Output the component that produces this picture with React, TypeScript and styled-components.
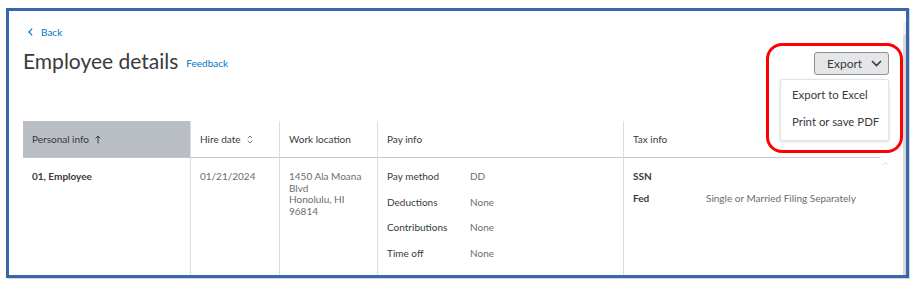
import * as React from 'react';
import styled, { createGlobalStyle } from 'styled-components';

const GlobalStyle = createGlobalStyle`
	html, body {
		margin: 0;
		background: #fff;
	}
	body {
		font-family: Lato, "Noto Sans", sans-serif;
		color: #393a3d;
	}
`;

const Page = styled.div`
	padding: 8px 10px 9px 6px;
`;

const Frame = styled.div`
	position: relative;
	height: 270px;
	box-sizing: border-box;
	border: 3px solid #3767aa;
	box-shadow: 1px 1px 0 #d6d6d6;
	display: flex;
	overflow: hidden;
	background: #fff;
`;

const Content = styled.div`
	flex: 1;
	padding: 15px 14px 0 14px;
	min-width: 0;
`;

const ScrollTrack = styled.div`
	width: 3px;
	margin-top: 11px;
	background: linear-gradient(#f0f0f0 0 13px, #d9d9d9 13px);
`;

const BackLink = styled.a`
	display: flex;
	align-items: center;
	gap: 8px;
	height: 11px;
	padding-left: 5px;
	font-size: 10px;
	color: #0077c5;
	text-decoration: none;
`;

const TitleRow = styled.div`
	display: flex;
	align-items: flex-start;
	justify-content: space-between;
	margin-top: 15px;
	height: 23px;
`;

const TitleGroup = styled.div`
	display: flex;
	align-items: baseline;
	gap: 8px;
	margin-top: -3px;
`;

const Title = styled.h1`
	margin: 0;
	font-size: 21px;
	font-weight: 400;
	line-height: 23px;
	color: #393a3d;
`;

const Feedback = styled.a`
	position: relative;
	top: -2px;
	font-size: 10px;
	color: #0077c5;
	text-decoration: none;
`;

const ExportWrap = styled.div`
	position: relative;
`;

const ExportButton = styled.button`
	display: flex;
	align-items: center;
	gap: 9px;
	width: 75px;
	height: 23px;
	box-sizing: border-box;
	padding: 0 0 0 12px;
	border: 1px solid #8d9096;
	border-radius: 3px;
	background: #e5e6e8;
	font-family: inherit;
	font-size: 12px;
	color: #393a3d;
`;

const Menu = styled.ul`
	position: absolute;
	top: 27px;
	right: 0;
	width: 109px;
	height: 62px;
	box-sizing: border-box;
	margin: 0;
	padding: 6px 0 0 11px;
	list-style: none;
	background: #fff;
	border: 1px solid #e3e4e6;
	border-radius: 2px;
	box-shadow: 0 1px 3px rgba(0, 0, 0, 0.15);
	z-index: 2;
`;

const MenuItem = styled.li`
	height: 27px;
	line-height: 18px;
	font-size: 11.4px;
	color: #393a3d;
	white-space: nowrap;
`;

const Highlight = styled.div`
	position: absolute;
	left: 757px;
	top: 32px;
	width: 137px;
	height: 110px;
	box-sizing: border-box;
	border: 3px solid #f00;
	border-radius: 16px;
	pointer-events: none;
	z-index: 3;
`;

const TableWrap = styled.div`
	display: flex;
	margin-top: 46px;
`;

const Table = styled.div`
	display: grid;
	grid-template-columns: 167px 89px 98px 246px 257px;
	grid-template-rows: 37px 1fr;
	height: 160px;
`;

const HeadCell = styled.div<{ $active?: boolean; $first?: boolean }>`
	display: flex;
	align-items: center;
	gap: 6px;
	padding-left: 9px;
	font-size: 10px;
	color: #393a3d;
	border-left: ${(p) => (p.$first ? 'none' : '1px solid #dcdde0')};
	border-bottom: 1px solid #c4c7cc;
	background: ${(p) => (p.$active ? '#babec5' : '#fff')};
`;

const Cell = styled.div<{ $first?: boolean }>`
	padding: 13px 0 0 9px;
	font-size: 10px;
	line-height: 11.5px;
	border-left: ${(p) => (p.$first ? 'none' : '1px solid #dcdde0')};
`;

const Strong = styled.div`
	font-weight: 700;
	color: #393a3d;
`;

const Muted = styled.div`
	color: #6b6c72;
`;

const Pairs = styled.div<{ $label: number; $gap: number }>`
	display: grid;
	grid-template-columns: ${(p) => p.$label}px auto;
	row-gap: ${(p) => p.$gap}px;
	justify-content: start;
`;

const PairLabel = styled.div<{ $bold?: boolean }>`
	color: #393a3d;
	font-weight: ${(p) => (p.$bold ? 700 : 400)};
`;

const PairValue = styled.div`
	color: #6b6c72;
`;

const Gutter = styled.div`
	width: 10px;
	padding: 41px 0 0 3px;

	svg {
		display: block;
	}
`;

const Chevron = ({ dir }: { dir: 'left' | 'down' | 'up' }) => {
	if (dir === 'left')
		return (
			<svg width="5" height="8" viewBox="0 0 5 8">
				<path d="M4.2 0.6 L0.8 4 L4.2 7.4" fill="none" stroke="#0077c5" strokeWidth="1.1" />
			</svg>
		);
	if (dir === 'down')
		return (
			<svg width="11" height="7" viewBox="0 0 11 7">
				<path d="M1 1 L5.5 5.5 L10 1" fill="none" stroke="#393a3d" strokeWidth="1.6" />
			</svg>
		);
	return (
		<svg width="5" height="3" viewBox="0 0 5 3">
			<path d="M0.5 2.5 L2.5 0.5 L4.5 2.5" fill="none" stroke="#c9cacc" strokeWidth="0.8" />
		</svg>
	);
};

const ArrowUp = () => (
	<svg width="6" height="9" viewBox="0 0 6 9">
		<path d="M3 8.5 V1 M0.6 3.4 L3 1 L5.4 3.4" fill="none" stroke="#393a3d" strokeWidth="1" />
	</svg>
);

const SortBoth = () => (
	<svg width="6" height="9" viewBox="0 0 6 9">
		<path d="M0.8 3.2 L3 1 L5.2 3.2 M0.8 5.8 L3 8 L5.2 5.8" fill="none" stroke="#6b6c72" strokeWidth="0.9" />
	</svg>
);

const payInfo = [
	['Pay method', 'DD'],
	['Deductions', 'None'],
	['Contributions', 'None'],
	['Time off', 'None'],
];

const taxInfo = [
	['SSN', ''],
	['Fed', 'Single or Married Filing Separately'],
];

export default function App() {
	return (
		<>
			<GlobalStyle />
			<Page>
				<Frame>
					<Content>
						<BackLink href="#">
							<Chevron dir="left" />
							Back
						</BackLink>
						<TitleRow>
							<TitleGroup>
								<Title>Employee details</Title>
								<Feedback href="#">Feedback</Feedback>
							</TitleGroup>
							<ExportWrap>
								<ExportButton>
									Export
									<Chevron dir="down" />
								</ExportButton>
								<Menu>
									<MenuItem>Export to Excel</MenuItem>
									<MenuItem>Print or save PDF</MenuItem>
								</Menu>
							</ExportWrap>
						</TitleRow>
						<TableWrap>
							<Table>
								<HeadCell $first $active>
									Personal info <ArrowUp />
								</HeadCell>
								<HeadCell>
									Hire date <SortBoth />
								</HeadCell>
								<HeadCell>Work location</HeadCell>
								<HeadCell>Pay info</HeadCell>
								<HeadCell>Tax info</HeadCell>

								<Cell $first>
									<Strong>01, Employee</Strong>
								</Cell>
								<Cell>
									<Muted>01/21/2024</Muted>
								</Cell>
								<Cell>
									<Muted>
										1450 Ala Moana
										<br />
										Blvd
										<br />
										Honolulu, HI
										<br />
										96814
									</Muted>
								</Cell>
								<Cell>
									<Pairs $label={83} $gap={14}>
										{payInfo.map(([k, v]) => (
											<React.Fragment key={k}>
												<PairLabel>{k}</PairLabel>
												<PairValue>{v}</PairValue>
											</React.Fragment>
										))}
									</Pairs>
								</Cell>
								<Cell>
									<Pairs $label={73} $gap={10.5}>
										{taxInfo.map(([k, v]) => (
											<React.Fragment key={k}>
												<PairLabel $bold>{k}</PairLabel>
												<PairValue>{v}</PairValue>
											</React.Fragment>
										))}
									</Pairs>
								</Cell>
							</Table>
							<Gutter>
								<Chevron dir="up" />
							</Gutter>
						</TableWrap>
					</Content>
					<ScrollTrack />
					<Highlight />
				</Frame>
			</Page>
		</>
	);
}
